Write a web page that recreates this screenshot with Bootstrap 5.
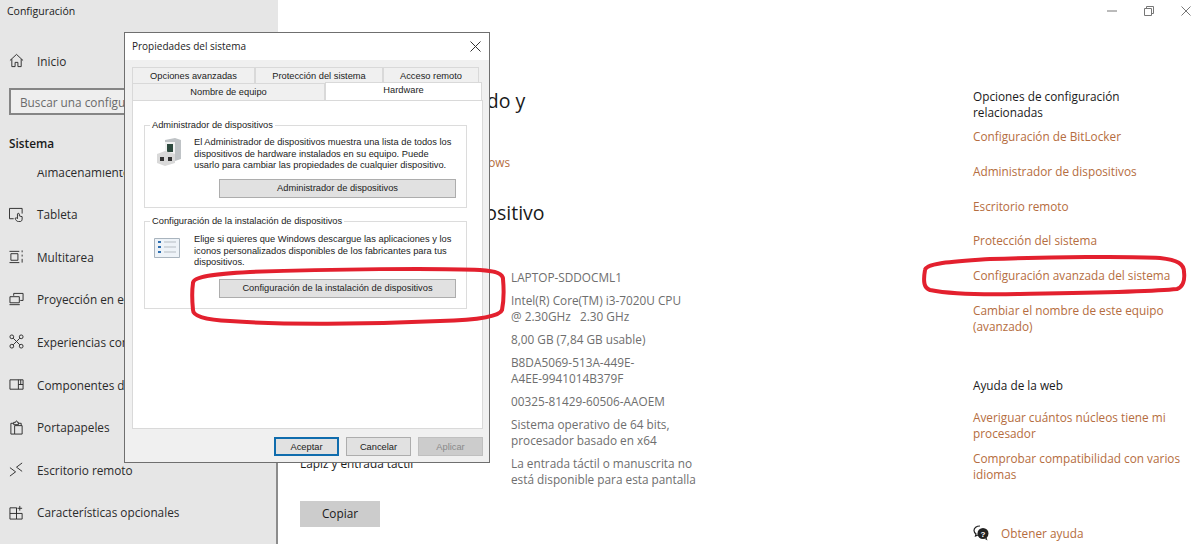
<!DOCTYPE html>
<html lang="es">
<head>
    <meta charset="UTF-8">
    <meta name="viewport" content="width=device-width, initial-scale=1.0">
    <title>Configuración</title>
    <link rel="stylesheet" href="https://cdn.jsdelivr.net/npm/bootstrap@5.3.3/dist/css/bootstrap.min.css">
    <style>
        html, body { height: 544px; overflow: hidden; }
        body { font-family: "Open Sans", "Noto Sans", sans-serif; font-size: 11.8px; line-height: 16px; color: #1a1a1a; background: #fff; }
        .page { position: relative; width: 1200px; height: 544px; overflow: hidden; }

        .side { width: 278px; height: 544px; flex: none; background: #e6e6e6; position: relative; }
        .side::after { content: ""; position: absolute; right: 0; top: 462px; bottom: 0; width: 2px; background: #8c8c8c; }
        .side-title { height: 22px; padding-left: 7px; font-size: 10.5px; line-height: 22px; }
        .side-row { height: 42.6px; padding-left: 9px; gap: 13px; color: #2b2b2b; white-space: nowrap; }
        .side-row svg { width: 15px; height: 15px; flex: none; fill: none; stroke: #2b2b2b; stroke-width: 1; }
        .side-home { margin-top: 17.7px; }
        .side-search { height: 27px; width: 262px; margin: 6px 0 0 9px; padding-left: 9px; border: 2px solid #858585; background: #eee; color: #6a6a6a; }
        .side-head { margin: 16px 0 0 9px; font-weight: 600; height: 24px; line-height: 24px; }
        .side-clip { height: 374px; margin-top: 15px; overflow: hidden; }
        .side-list { margin-top: -20px; }

        .main { width: 695px; flex: none; padding: 89px 0 0 22px; white-space: nowrap; }
        .main h2 { font-size: 19.5px; line-height: 24px; font-weight: 400; margin: 0; color: #1a1a1a; }
        .sec-link { margin-top: 41px; height: 16px; }
        .orange { color: #b56d40; text-decoration: none; }
        .main .spec-head { margin-top: 31px; }
        .specs { display: grid; grid-template-columns: 211px 230px; row-gap: 7px; margin-top: 44px; }
        .specs div:nth-child(even) { color: #6e6e6e; }
        .copy-btn { width: 80px; height: 26px; margin-top: 14px; padding: 0; border: 0; border-radius: 0; background: #ccc; color: #1a1a1a; font-size: 11.8px; }

        .rel { padding-top: 88px; width: 227px; white-space: nowrap; }
        .rel-gap { margin-top: 8px; }
        .rel a { display: block; margin-bottom: 18.8px; }
        .rel-help { margin-top: 43px; }
        .rel-web { margin-top: 16px; }
        .rel-web a { margin-bottom: 9px; }
        .rel-get { margin-top: 43px; gap: 12px; }
        .rel-get a { margin-bottom: 0; }
        .rel-get svg { width: 16px; height: 16px; flex: none; }

        .win-btns { position: absolute; top: 5px; right: 9px; gap: 27px; }
        .win-btns svg { width: 10px; height: 12px; fill: none; stroke: #777; stroke-width: 1; }

        .dlg { position: absolute; left: 124px; top: 32px; width: 366px; height: 431px; background: #f0f0f0; border: 1px solid #6f6f6f; font-family: "Liberation Sans", Arial, sans-serif; font-size: 9.3px; line-height: 11.6px; color: #222; white-space: nowrap; }
        .dlg-title { height: 27px; background: #fff; padding: 0 8px 0 7px; font-family: "Open Sans", sans-serif; font-size: 10px; }
        .dlg-title svg { width: 11px; height: 11px; stroke: #333; stroke-width: 1; }
        .dlg-tabs { margin: 7px 7px 0; position: relative; }
        .tab-row { height: 16px; width: 347px; }
        .tab-row + .tab-row { height: 17px; width: 350px; }
        .dlg-tab { background: #f0f0f0; border: 1px solid #d9d9d9; border-bottom: 0; text-align: center; line-height: 17px; }
        .tab-on { background: #fff; line-height: 15px; margin-top: -1px; position: relative; z-index: 1; }
        .dlg-panel { margin: 0 7px; width: 351px; height: 329px; background: #fff; border: 1px solid #d9d9d9; padding: 24px 15px 0 11px; }
        .grp { position: relative; border: 1px solid #dcdcdc; padding: 11px 9px 9px 9px; }
        .grp-one { height: 83px; }
        .grp-two { height: 88px; margin-top: 13px; padding-top: 12px; }
        .grp-label { position: absolute; left: 5px; top: -6px; background: #fff; padding: 0 2px; }
        .grp-icon { width: 32px; height: 30px; flex: none; margin-right: 8px; }
        .dlg-btn { display: block; width: 237px; height: 19px; margin: 7px 0 0 65px; padding: 0; border: 1px solid #adadad; border-radius: 0; background: #e1e1e1; color: #222; font-size: 9.3px; line-height: 16px; }
        .grp-two .dlg-btn { margin-top: 10px; }
        .dlg-foot { margin: 8px 6px 0 0; gap: 7px; }
        .foot-btn { width: 65px; height: 19px; padding: 0; border: 1px solid #adadad; border-radius: 0; background: #e1e1e1; color: #222; font-size: 9.3px; line-height: 16px; }
        .foot-main { border: 2px solid #0f6cad; }
        .foot-off, .foot-off:disabled { background: #ccc; border-color: #bfbfbf; color: #8a8a8a; opacity: 1; }

        .marks { position: absolute; left: 0; top: 0; pointer-events: none; }
    </style>
</head>
<body>
    <div class="page d-flex">
        <aside class="side">
            <div class="side-title">Configuración</div>
            <div class="side-row side-home d-flex align-items-center">
                <svg viewBox="0 0 16 16"><path d="M1 8 8 1.5 15 8M3 6.5V14.5H6.5V10H9.5V14.5H13V6.5"/></svg>
                <span>Inicio</span>
            </div>
            <div class="side-search d-flex align-items-center">Buscar una configuración</div>
            <div class="side-head">Sistema</div>
            <div class="side-clip">
                <div class="side-list d-flex flex-column">
                    <div class="side-row d-flex align-items-center"><svg viewBox="0 0 16 16"></svg><span>Almacenamiento</span></div>
                    <div class="side-row d-flex align-items-center">
                        <svg viewBox="0 0 16 16"><path d="M5 12.5H.5V1.5H14V7M10 15.5C8.5 15.5 7 14 6.5 12L8 11.5 9 12.5V7.5C9 6.5 11 6.5 11 7.5V9.5L14 10.3V13C14 14.5 13 15.5 12 15.5Z"/></svg>
                        <span>Tableta</span>
                    </div>
                    <div class="side-row d-flex align-items-center">
                        <svg viewBox="0 0 16 16"><path d="M.5 2.5H11M.5 14.5H11M2 5H9.5V12H2ZM14 1.5V3.5M14 6V8M14 10.5V14.5"/></svg>
                        <span>Multitarea</span>
                    </div>
                    <div class="side-row d-flex align-items-center">
                        <svg viewBox="0 0 16 16"><path d="M5 4V1.5H15V9H12M1 5H11V11.5H1ZM.5 13.5H11.5"/></svg>
                        <span>Proyección en esta PC</span>
                    </div>
                    <div class="side-row d-flex align-items-center">
                        <svg viewBox="0 0 16 16"><circle cx="3" cy="3" r="2"/><circle cx="13" cy="3" r="2"/><circle cx="3" cy="13" r="2"/><circle cx="13" cy="13" r="2"/><path d="M4.5 4.5 11.5 11.5M11.5 4.5 4.5 11.5"/></svg>
                        <span>Experiencias compartidas</span>
                    </div>
                    <div class="side-row d-flex align-items-center">
                        <svg viewBox="0 0 16 16"><path d="M1 3H15V13H1ZM10 3V13M10 8H15M12.5 3V8"/></svg>
                        <span>Componentes de Windows</span>
                    </div>
                    <div class="side-row d-flex align-items-center">
                        <svg viewBox="0 0 16 16"><path d="M5 3.5H2V15H6M10 3.5H13V6M6 6H14V15H6ZM5 5V2.5H7C7 .5 9 .5 9 2.5H10V5Z"/></svg>
                        <span>Portapapeles</span>
                    </div>
                    <div class="side-row d-flex align-items-center">
                        <svg viewBox="0 0 16 16"><path d="M1 6 7 10.5 1 15M14 1 8 5.5 14 10"/></svg>
                        <span>Escritorio remoto</span>
                    </div>
                    <div class="side-row d-flex align-items-center">
                        <svg viewBox="0 0 16 16"><path d="M1 3H8V15H1ZM1 9H14V15H8M8 9V3M11.5 1V6M9 3.5H14"/></svg>
                        <span>Características opcionales</span>
                    </div>
                </div>
            </div>
        </aside>

        <main class="main">
            <h2>Tu PC está supervisado y</h2>
            <div class="sec-link"><a class="orange" href="#">Ver detalles en Seguridad de Windows</a></div>
            <h2 class="spec-head">Propiedades de dispositivo</h2>
            <div class="specs">
                <div>Nombre del dispositivo</div><div>LAPTOP-SDDOCML1</div>
                <div>Procesador</div><div>Intel(R) Core(TM) i3-7020U CPU<br>@ 2.30GHz &nbsp; 2.30 GHz</div>
                <div>RAM instalada</div><div>8,00 GB (7,84 GB usable)</div>
                <div>Id. del dispositivo</div><div>B8DA5069-513A-449E-<br>A4EE-9941014B379F</div>
                <div>Id. del producto</div><div>00325-81429-60506-AAOEM</div>
                <div>Tipo de sistema</div><div>Sistema operativo de 64 bits,<br>procesador basado en x64</div>
                <div>Lápiz y entrada táctil</div><div>La entrada táctil o manuscrita no<br>está disponible para esta pantalla</div>
            </div>
            <button class="btn copy-btn" type="button">Copiar</button>
        </main>

        <section class="rel flex-shrink-0">
            <div>Opciones de configuración<br>relacionadas</div>
            <div class="rel-gap">
                <a class="orange" href="#">Configuración de BitLocker</a>
                <a class="orange" href="#">Administrador de dispositivos</a>
                <a class="orange" href="#">Escritorio remoto</a>
                <a class="orange" href="#">Protección del sistema</a>
                <a class="orange" href="#">Configuración avanzada del sistema</a>
                <a class="orange" href="#">Cambiar el nombre de este equipo<br>(avanzado)</a>
            </div>
            <div class="rel-help">Ayuda de la web</div>
            <div class="rel-web">
                <a class="orange" href="#">Averiguar cuántos núcleos tiene mi<br>procesador</a>
                <a class="orange" href="#">Comprobar compatibilidad con varios<br>idiomas</a>
            </div>
            <div class="rel-get d-flex align-items-center">
                <svg viewBox="0 0 16 16"><path d="M7 1C3.5 1 1 3 1 5.5 1 7 1.8 8 3 9L2.5 11 5 10" fill="none" stroke="#222" stroke-width="1.2"/><circle cx="10" cy="8.5" r="5.5" fill="#222"/><path d="M12 14 14.5 15.5 13.5 12.5Z" fill="#222"/><text x="10" y="11.5" font-size="8" font-weight="700" fill="#fff" text-anchor="middle" font-family="Liberation Sans">?</text></svg>
                <a class="orange" href="#">Obtener ayuda</a>
            </div>
        </section>

        <div class="win-btns d-flex align-items-center">
            <svg viewBox="0 0 10 12"><path d="M0 6H10"/></svg>
            <svg viewBox="0 0 10 12"><path d="M.5 3.5H7.5V10.5H.5ZM2.5 3.5V1.5H9.5V8.5H7.5"/></svg>
            <svg viewBox="0 0 10 12"><path d="M.5 1.5 9.5 10.5M9.5 1.5 .5 10.5"/></svg>
        </div>

        <div class="dlg">
            <div class="dlg-title d-flex align-items-center justify-content-between">
                <span>Propiedades del sistema</span>
                <svg viewBox="0 0 11 11"><path d="M.5 .5 10.5 10.5M10.5 .5 .5 10.5"/></svg>
            </div>
            <div class="dlg-tabs">
                <div class="tab-row d-flex">
                    <div class="dlg-tab" style="width:123px">Opciones avanzadas</div>
                    <div class="dlg-tab" style="width:128px">Protección del sistema</div>
                    <div class="dlg-tab" style="width:96px">Acceso remoto</div>
                </div>
                <div class="tab-row d-flex">
                    <div class="dlg-tab" style="width:193px">Nombre de equipo</div>
                    <div class="dlg-tab tab-on" style="width:157px">Hardware</div>
                </div>
            </div>
            <div class="dlg-panel">
                <div class="grp grp-one">
                    <span class="grp-label">Administrador de dispositivos</span>
                    <div class="d-flex">
                        <svg class="grp-icon" viewBox="0 0 32 30">
                            <path d="M11 3 21 1 27 3V22L21 24V6L11 5Z" fill="#bfc3c6"/>
                            <path d="M11 5H21V24H11Z" fill="#f2f2f2"/>
                            <path d="M13 7H19V15H13Z" fill="#2d4a3e"/>
                            <path d="M3 17 11 14 21 17V26L11 29 3 26Z" fill="#d9d9d9"/>
                            <path d="M6 20H10V24H6ZM14 20H18V24H14Z" fill="#333"/>
                        </svg>
                        <div>El Administrador de dispositivos muestra una lista de todos los<br>dispositivos de hardware instalados en su equipo. Puede<br>usarlo para cambiar las propiedades de cualquier dispositivo.</div>
                    </div>
                    <button class="btn dlg-btn" type="button">Administrador de dispositivos</button>
                </div>
                <div class="grp grp-two">
                    <span class="grp-label">Configuración de la instalación de dispositivos</span>
                    <div class="d-flex">
                        <svg class="grp-icon" viewBox="0 0 32 30">
                            <path d="M.5 4.5H25.5V23.5H.5Z" fill="#eef3f8" stroke="#a9b4be"/>
                            <path d="M4 8H7M4 13H7M4 18H7" stroke="#2f6fb0" stroke-width="2"/>
                            <path d="M10 8H22M10 13H22M10 18H22" stroke="#b5bcc3"/>
                        </svg>
                        <div>Elige si quieres que Windows descargue las aplicaciones y los<br>iconos personalizados disponibles de los fabricantes para tus<br>dispositivos.</div>
                    </div>
                    <button class="btn dlg-btn" type="button">Configuración de la instalación de dispositivos</button>
                </div>
            </div>
            <div class="dlg-foot d-flex justify-content-end">
                <button class="btn foot-btn foot-main" type="button">Aceptar</button>
                <button class="btn foot-btn" type="button">Cancelar</button>
                <button class="btn foot-btn foot-off" type="button" disabled>Aplicar</button>
            </div>
        </div>

        <svg class="marks" width="1200" height="544" fill="none" stroke="#e3202e" stroke-width="4">
            <path d="M193 283C193 276 215 274 250 272 330 269 440 268 480 270 497 271 503 274 503 279 504 290 504 300 502 310 500 316 480 320 440 321 370 324 280 325 230 321 205 320 193 316 193 310 192 300 192 290 193 283Z"/>
            <path d="M925 270C926 263 950 262 990 259 1050 257 1130 256 1160 258 1178 260 1184 264 1184 272 1185 280 1183 287 1177 289 1150 292 1080 293 1020 294 980 295 945 293 930 290 924 288 923 282 925 270Z"/>
        </svg>
    </div>
    <script src="https://cdn.jsdelivr.net/npm/bootstrap@5.3.3/dist/js/bootstrap.bundle.min.js"></script>
</body>
</html>
